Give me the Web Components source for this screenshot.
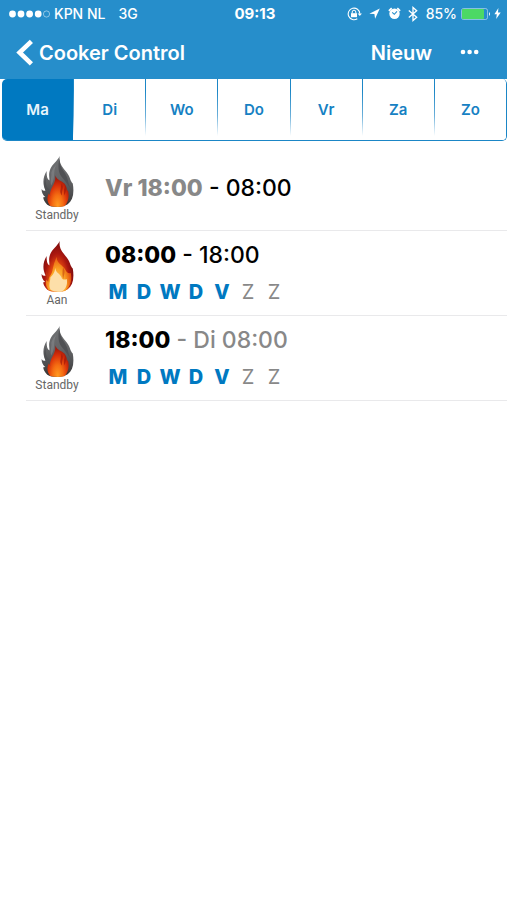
<!DOCTYPE html>
<html lang="nl">
<head>
<meta charset="utf-8">
<meta name="viewport" content="width=device-width, initial-scale=1">
<title>Cooker Control</title>
<style>
body { margin: 0; background: #fff; font-family: Inter, "Liberation Sans", sans-serif; }
</style>
</head>
<body>
<cooker-app></cooker-app>
<script>
function define(name, html, setup) {
  const template = document.createElement('template');
  template.innerHTML = html;
  customElements.define(name, class extends HTMLElement {
    connectedCallback() {
      if (this.shadowRoot) return;
      this.attachShadow({ mode: 'open' }).append(template.content.cloneNode(true));
      if (setup) setup(this, this.shadowRoot);
    }
  });
}

define('status-bar', `
<style>
:host { display: grid; grid-template-columns: 1fr auto 1fr; align-items: center; height: 27px; padding: 0 6px 0 9px; font-size: 14px; font-weight: 500; line-height: 18px; }
.side { display: flex; align-items: center; white-space: nowrap; }
.left svg { margin-right: 4px; }
.left span + span { margin-left: 13px; }
.right { justify-content: flex-end; }
time { font-size: 15px; font-weight: 700; }
svg { display: block; flex: none; }
.lock { margin-right: 7px; }
.arrow { margin-right: 8px; }
.alarm { margin-right: 7px; }
.bt { margin-right: 8px; }
.battery { margin: 0 3px 0 4px; }
</style>
<div class="side left">
  <svg width="41" height="10" viewBox="0 0 41 10" aria-hidden="true"><g fill="#fff"><circle cx="3.5" cy="5" r="3.4"/><circle cx="12" cy="5" r="3.4"/><circle cx="20.6" cy="5" r="3.4"/><circle cx="29.2" cy="5" r="3.4"/></g><circle cx="37.5" cy="5" r="3.1" fill="none" stroke="#fff" stroke-opacity=".6" stroke-width=".8"/></svg>
  <span>KPN NL</span><span>3G</span>
</div>
<time>09:13</time>
<div class="side right">
  <svg class="lock" width="15" height="14" viewBox="0 0 15 14" fill="none" stroke="#fff" aria-hidden="true"><path d="M10.3 11.7A5.8 5.8 0 1 1 12.8 6.6" stroke-width="1.1"/><path d="M10.6 6.4h4.3l-2.1 2.7z" fill="#fff" stroke="none"/><rect x="4" y="6.2" width="6" height="4" fill="#fff" stroke="none"/><path d="M5.2 6.4V5a1.8 1.8 0 0 1 3.6 0v1.4"/></svg>
  <svg class="arrow" width="11" height="11" viewBox="0 0 11 11" fill="#fff" aria-hidden="true"><path d="M10.8.4 6.1 10.8 5.4 6.1.3 5.7z"/></svg>
  <svg class="alarm" width="13" height="13" viewBox="0 0 13 13" aria-hidden="true"><circle cx="6.5" cy="6.8" r="5.2" fill="#fff"/><path d="M.9 3.8 3.7 1.2M12.1 3.8 9.3 1.2" stroke="#fff" stroke-width="1.8"/><path d="M4.2 5.3 6.3 7.3 9 4.3" fill="none" stroke="#268ecb" stroke-width="1.1"/></svg>
  <svg class="bt" width="10" height="16" viewBox="0 0 10 16" fill="none" stroke="#fff" stroke-width="1.3" aria-hidden="true"><path d="M.8 4.6 8.7 11.3 5 14.5V1.5L8.7 4.7.8 11.4"/></svg>
  <span>85%</span>
  <svg class="battery" width="30" height="12" viewBox="0 0 30 12" aria-hidden="true"><rect x=".5" y=".5" width="26" height="11" rx="2" fill="none" stroke="#fff" stroke-opacity=".45"/><rect x="1" y="1" width="22" height="10" rx="1" fill="#4cd964"/><path d="M28 4q2 2 0 4z" fill="#fff"/></svg>
  <svg width="7" height="11" viewBox="0 0 7 11" fill="#fff" aria-hidden="true"><path d="M4.4 0 .4 6.2h2.4L2.2 11 6.7 4.4H4z"/></svg>
</div>`);

define('nav-bar', `
<style>
:host { display: flex; align-items: center; height: 52px; padding: 0 27px 0 16px; }
button { display: flex; align-items: center; margin: 0; padding: 0; border: 0; background: none; color: inherit; font: 600 20px/26px Inter, sans-serif; cursor: pointer; white-space: nowrap; }
.back { gap: 5px; margin-right: auto; }
.more { margin-left: 28px; height: 26px; }
svg { display: block; }
</style>
<button class="back" type="button"><svg width="18" height="28" viewBox="0 0 18 28" fill="none" stroke="#fff" stroke-width="4.6" aria-hidden="true"><path d="M15.4 2.4 3.6 13.5 15.4 24.8"/></svg><slot></slot></button>
<button type="button"><slot name="action"></slot></button>
<button class="more" type="button" aria-label="Meer"><svg width="20" height="8" viewBox="0 0 20 8" fill="#fff" aria-hidden="true"><circle cx="3" cy="3" r="2.3"/><circle cx="9.6" cy="3" r="2.3"/><circle cx="16.2" cy="3" r="2.3"/></svg></button>`);

define('day-tabs', `
<style>
:host { display: flex; height: 62px; margin-left: 2px; box-sizing: border-box; border: solid #1b86c6; border-width: 0 1px 1px 0; border-radius: 5px; overflow: hidden; }
button { flex: 1; min-width: 0; margin: 0; padding: 0; border: 0; background: #fff; color: #1681c3; font: 600 15px/20px Inter, sans-serif; cursor: pointer; }
button + button { border-left: 1px solid; border-image: linear-gradient(#1b86c6 20%, #6cb0da 60%, #fff 92%) 1; }
button[aria-pressed="true"] { background: #0079c1; color: #e8f4fb; }
</style>`, (host, root) => {
  host.getAttribute('days').split(' ').forEach((day, i) => {
    const button = document.createElement('button');
    button.type = 'button';
    button.textContent = day;
    button.setAttribute('aria-pressed', i === 0);
    button.addEventListener('click', () => root.querySelectorAll('button').forEach(b => b.setAttribute('aria-pressed', b === button)));
    root.append(button);
  });
});

define('flame-icon', `
<style>
:host { display: block; }
:host(:not([state="on"])) .hot, :host([state="on"]) .ember { display: none; }
svg { display: block; }
</style>
<svg width="33" height="51" viewBox="64 19 97 152" aria-hidden="true">
  <defs>
    <path id="body" d="M119 19C116 42 128 53 140 68C151 82 150 93 158 101C163 131 158 151 143 163C131 172 96 174 82 164C73 156 70 147 70 142L76 141C69 135 65 127 65 117Q70 125 77 122C67 102 69 83 80 64C80 80 82 88 88 92C90 85 84 76 91 58C97 43 113 33 119 19Z"/>
    <linearGradient id="ash" x2="0" y2="1"><stop stop-color="#707274"/><stop offset=".45" stop-color="#646567"/><stop offset=".75" stop-color="#4d4e50"/><stop offset="1" stop-color="#37332f"/></linearGradient>
    <radialGradient id="ember" gradientUnits="userSpaceOnUse" cx="0" cy="0" r="1" gradientTransform="translate(113 166) scale(44 88)"><stop stop-color="#ff9a20"/><stop offset=".35" stop-color="#f56d12"/><stop offset=".68" stop-color="#d93009"/><stop offset="1" stop-color="#8f1009"/></radialGradient>
    <radialGradient id="fire" gradientUnits="userSpaceOnUse" cx="0" cy="0" r="1" gradientTransform="translate(112 152) scale(52 132)"><stop stop-color="#f57a12"/><stop offset=".5" stop-color="#dd420f"/><stop offset=".72" stop-color="#ac180f"/><stop offset="1" stop-color="#780b0d"/></radialGradient>
    <radialGradient id="blaze" gradientUnits="userSpaceOnUse" cx="0" cy="0" r="1" gradientTransform="translate(112 160) scale(42 96)"><stop stop-color="#ffd27a"/><stop offset=".6" stop-color="#fba324"/><stop offset="1" stop-color="#e5530d"/></radialGradient>
  </defs>
  <g class="ember">
    <use href="#body" fill="url(#ash)"/>
    <path fill="#505154" d="M119 26C117 46 128 60 137 74C145 87 143 101 151 115C141 103 135 92 124 80C116 70 112 49 119 26ZM78 81C75 97 79 113 88 119L83 132C72 118 70 98 78 81Z"/>
    <path fill="#85878a" opacity=".6" d="M111 43C99 58 106 75 99 96L94 107C89 94 96 81 94 68Q98 54 111 43Z"/>
    <path fill="url(#ember)" d="M106 76C109 90 126 93 133 101C141 111 138 120 144 123C149 142 143 158 133 169Q111 173 91 168C81 157 80 142 87 130L91 138C86 118 109 104 106 76Z"/>
    <path fill="#a51b09" opacity=".75" d="M124 101C134 110 124 122 126 137Q118 127 122 117ZM132 119L137 106Q142 119 132 137Z"/>
  </g>
  <g class="hot">
    <use href="#body" fill="url(#fire)"/>
    <path fill="url(#blaze)" d="M110 66C109 87 130 91 136 105C140 115 146 116 152 114C157 140 149 158 135 168Q108 173 86 165C76 153 76 142 80 134L85 142C83 125 96 122 98 103Q102 84 110 66Z"/>
    <path fill="#c7430c" opacity=".6" d="M129 98C138 110 131 119 130 133Q125 121 129 98ZM79 101Q79 117 88 128L85 139Q76 120 79 101Z"/>
    <path fill="#fddfa9" d="M106 99C106 112 118 116 124 126C126 137 136 134 140 132C144 151 135 165 124 170Q103 172 92 164C84 151 92 137 91 128Q104 117 106 99Z"/>
  </g>
</svg>`);

define('schedule-row', `
<style>
:host { display: flex; box-sizing: border-box; height: 85px; margin-left: 26px; border-bottom: 1px solid #e9e9eb; }
.state { display: flex; flex-direction: column; align-items: center; width: 62px; padding-top: 10px; box-sizing: border-box; font: 12px/14px Roboto, sans-serif; color: #666; }
.state span { margin-top: 1px; }
.info { display: flex; flex-direction: column; justify-content: center; gap: 9px; padding-left: 17px; }
.time { font-size: 23px; line-height: 30px; font-weight: 500; white-space: nowrap; }
</style>
<div class="state"><flame-icon></flame-icon><span></span></div>
<div class="info"><div class="time"><slot></slot></div><slot name="days"></slot></div>`, (host, root) => {
  root.querySelector('flame-icon').setAttribute('state', host.getAttribute('state'));
  root.querySelector('span').textContent = host.getAttribute('label');
});

define('week-days', `
<style>
:host { display: flex; padding-bottom: 2px; font-size: 20px; line-height: 26px; color: #888; }
span { width: 26px; text-align: center; }
.on { color: #0079c1; font-weight: 800; }
</style>`, (host, root) => {
  const active = Number(host.getAttribute('active'));
  [...'MDWDVZZ'].forEach((letter, i) => {
    const span = document.createElement('span');
    span.textContent = letter;
    if (i < active) span.className = 'on';
    root.append(span);
  });
});

define('cooker-app', `
<style>
:host { display: block; }
header { background: #268ecb; color: #fff; }
main { padding-top: 5px; }
b { font-weight: 800; }
.other { color: #888; }
</style>
<header><status-bar></status-bar><nav-bar>Cooker Control<span slot="action">Nieuw</span></nav-bar></header>
<day-tabs days="Ma Di Wo Do Vr Za Zo"></day-tabs>
<main>
  <schedule-row state="standby" label="Standby"><b class="other">Vr 18:00</b> - 08:00</schedule-row>
  <schedule-row state="on" label="Aan"><b>08:00</b> - 18:00<week-days slot="days" active="5"></week-days></schedule-row>
  <schedule-row state="standby" label="Standby"><b>18:00</b> <span class="other">- Di 08:00</span><week-days slot="days" active="5"></week-days></schedule-row>
</main>`);
</script>
</body>
</html>
